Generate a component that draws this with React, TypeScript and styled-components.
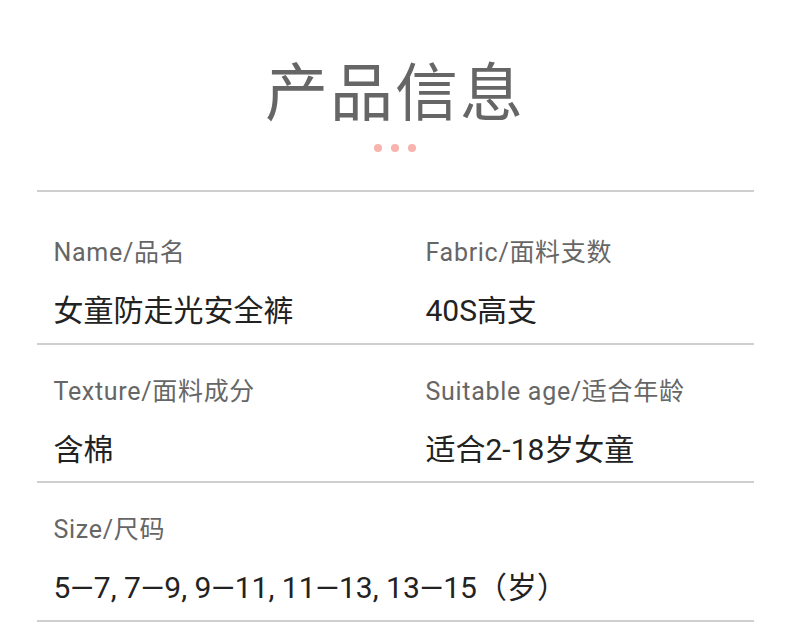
import React from "react";
import styled, { createGlobalStyle } from "styled-components";

const GlobalStyle = createGlobalStyle`
  html, body {
    margin: 0;
    padding: 0;
    background: #fff;
  }
  body {
    font-family: Roboto, "Noto Sans CJK SC", sans-serif;
  }
`;

type Item = { label: string; value: string };

const rows: Item[][] = [
  [
    { label: "Name/品名", value: "女童防走光安全裤" },
    { label: "Fabric/面料支数", value: "40S高支" },
  ],
  [
    { label: "Texture/面料成分", value: "含棉" },
    { label: "Suitable age/适合年龄", value: "适合2-18岁女童" },
  ],
  [{ label: "Size/尺码", value: "5—7, 7—9, 9—11, 11—13, 13—15（岁）" }],
];

// row heights including the bottom rule
const rowHeights = [153, 138, 139];
const rowTops = [43, 29, 29];

const Page = styled.div`
  width: 790px;
  height: 636px;
  overflow: hidden;
  display: flex;
  flex-direction: column;
  align-items: center;
`;

const Title = styled.h1`
  margin: 43px 0 0;
  font-family: "Noto Sans CJK SC", sans-serif;
  font-size: 63px;
  line-height: 90px;
  font-weight: 400;
  color: #666;
  letter-spacing: 2px;
`;

const Dots = styled.div`
  display: flex;
  gap: 9px;
  margin-top: 11px;
`;

const Dot = styled.span`
  width: 8px;
  height: 8px;
  border-radius: 50%;
  background: #f7b3ad;
`;

const Table = styled.div`
  width: 717px;
  margin-top: 38px;
  border-top: 2px solid #cfcfcf;
`;

const Row = styled.div<{ $height: number; $top: number }>`
  display: grid;
  grid-template-columns: 372px 1fr;
  padding: ${(p) => p.$top}px 17px 0;
  height: ${(p) => p.$height}px;
  box-sizing: border-box;
  border-bottom: 2px solid #cfcfcf;
`;

const Cell = styled.div<{ $wide?: boolean }>`
  display: flex;
  flex-direction: column;
  white-space: nowrap;
  grid-column: ${(p) => (p.$wide ? "1 / span 2" : "auto")};
`;

const Label = styled.div`
  font-size: 25px;
  line-height: 36px;
  letter-spacing: 0.7px;
  color: #666;
`;

const Value = styled.div`
  margin-top: 22px;
  font-size: 30px;
  line-height: 36px;
  color: #222;
`;

export default function App() {
  return (
    <>
      <GlobalStyle />
      <Page>
        <Title>产品信息</Title>
        <Dots>
          <Dot />
          <Dot />
          <Dot />
        </Dots>
        <Table>
          {rows.map((row, i) => (
            <Row key={i} $height={rowHeights[i]} $top={rowTops[i]}>
              {row.map((item) => (
                <Cell key={item.label} $wide={row.length === 1}>
                  <Label>{item.label}</Label>
                  <Value>{item.value}</Value>
                </Cell>
              ))}
            </Row>
          ))}
        </Table>
      </Page>
    </>
  );
}
